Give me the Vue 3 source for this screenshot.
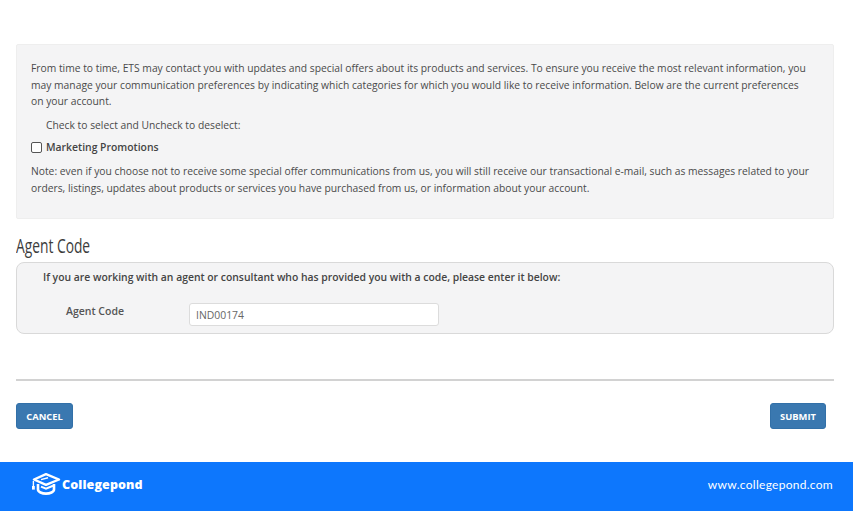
<script setup>
const intro = 'From time to time, ETS may contact you with updates and special offers about its products and services. To ensure you receive the most relevant information, you may manage your communication preferences by indicating which categories for which you would like to receive information. Below are the current preferences on your account.'
const note = 'Note: even if you choose not to receive some special offer communications from us, you will still receive our transactional e-mail, such as messages related to your orders, listings, updates about products or services you have purchased from us, or information about your account.'
</script>

<template>
  <div class="page">
    <main class="content">
      <section class="prefs">
        <p class="intro">{{ intro }}</p>
        <p class="check-hint">Check to select and Uncheck to deselect:</p>
        <label class="check-row">
          <input type="checkbox" class="check" />
          <span>Marketing Promotions</span>
        </label>
        <p class="note">{{ note }}</p>
      </section>

      <h2 class="heading">Agent Code</h2>
      <section class="agent">
        <p class="agent-lead">If you are working with an agent or consultant who has provided you with a code, please enter it below:</p>
        <div class="agent-row">
          <label class="agent-label" for="agent-code">Agent Code</label>
          <input id="agent-code" class="agent-input" type="text" value="IND00174" />
        </div>
      </section>

      <hr class="rule" />

      <div class="actions">
        <button class="btn" type="button">CANCEL</button>
        <button class="btn btn-submit" type="button">SUBMIT</button>
      </div>
    </main>

    <footer class="footer">
      <div class="brand">
        <svg class="logo" viewBox="0 0 30 22" width="30" height="22" aria-hidden="true">
          <path d="M15 1.2 L28 6.5 L15 11.8 L3 6.5 Z" fill="none" stroke="#fff" stroke-width="2.4" stroke-linejoin="round" />
          <path d="M7 11 V16.5 C7 19 11 20.6 15 20.6 C19 20.6 23 19 23 16.5 V11" fill="none" stroke="#fff" stroke-width="2.6" />
          <path d="M10 6.6 L17 4.8" stroke="#fff" stroke-width="1.4" fill="none" />
          <path d="M10 13.6 L15 15.6 L22 12.8" stroke="#fff" stroke-width="2" fill="none" />
          <path d="M2.4 8 V13" stroke="#fff" stroke-width="1.4" />
          <rect x="1" y="13" width="2.8" height="3.6" fill="#fff" />
        </svg>
        <span class="brand-name">Collegepond</span>
      </div>
      <span class="site">www.collegepond.com</span>
    </footer>
  </div>
</template>

<style>
html, body { margin: 0; background: #fff; }
</style>

<style scoped>
.page {
  width: 853px;
  height: 511px;
  display: flex;
  flex-direction: column;
  overflow: hidden;
  font-family: "Open Sans", "Noto Sans", sans-serif;
  color: #4a4a4a;
}
.content {
  flex: 1;
  padding: 44px 19px 0 16px;
}
.prefs {
  height: 175px;
  box-sizing: border-box;
  padding: 15px 22px 0 14px;
  background: #f4f4f5;
  border: 1px solid #eeeeee;
  border-radius: 2px;
  font-size: 10.3px;
  line-height: 16.6px;
}
.prefs p { margin: 0; }
.check-hint { padding: 7px 0 0 15px; }
.check-row {
  display: flex;
  align-items: center;
  gap: 4px;
  margin-top: 6px;
  font-size: 10.4px;
  font-weight: 600;
  color: #444;
}
.check {
  width: 11px;
  height: 11px;
  margin: 0;
  appearance: none;
  background: #fff;
  border: 1px solid #555;
  border-radius: 2px;
}
.note { margin-top: 7px !important; }
.heading {
  margin: 14px 0 4px;
  height: 25px;
  font-size: 20px;
  line-height: 25px;
  font-weight: 400;
  color: #3c3c3c;
  transform: scaleX(0.69);
  transform-origin: left center;
}
.agent {
  height: 72px;
  box-sizing: border-box;
  padding: 6px 26px 0;
  background: #f4f4f5;
  border: 1px solid #d9d9d9;
  border-radius: 8px;
  font-size: 10.38px;
}
.agent-lead {
  margin: 0;
  line-height: 16px;
  font-weight: 600;
  color: #444;
}
.agent-row {
  display: flex;
  align-items: center;
  margin-top: 11px;
  padding-left: 23px;
}
.agent-label {
  width: 123px;
  font-size: 10.5px;
  font-weight: 600;
  color: #555;
}
.agent-input {
  width: 250px;
  height: 23px;
  box-sizing: border-box;
  padding: 0 6px;
  margin-top: 7px;
  background: #fff;
  border: 1px solid #dcdcdc;
  border-radius: 3px;
  font: 400 10.4px "Open Sans", sans-serif;
  color: #666;
}
.rule {
  margin: 45px 0 0;
  border: 0;
  height: 2px;
  background: #d2d2d2;
}
.actions {
  display: flex;
  justify-content: space-between;
  padding: 22px 8px 0 0;
}
.btn {
  height: 26px;
  width: 57px;
  padding: 0;
  border: 1px solid #3270a8;
  border-radius: 3px;
  background: #3a78b0;
  color: #fff;
  font: 700 9.4px "Open Sans", sans-serif;
}
.btn-submit { width: 56px; }
.footer {
  flex: 0 0 49px;
  box-sizing: border-box;
  display: flex;
  align-items: center;
  justify-content: space-between;
  padding: 0 20px 5px 31px;
  background: #0d77fd;
  color: #fff;
}
.brand { display: flex; align-items: center; gap: 1px; }
.logo { display: block; }
.brand-name {
  font-family: "Open Sans", sans-serif;
  font-size: 12.5px;
  font-weight: 800;
  letter-spacing: 0.1px;
}
.site {
  font-family: "Lato", sans-serif;
  font-size: 12px;
  letter-spacing: 0.28px;
}
</style>
